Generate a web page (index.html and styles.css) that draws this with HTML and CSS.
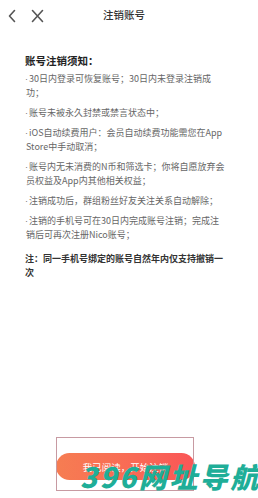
FILE: index.html
```html
<!DOCTYPE html>
<html lang="zh-CN">
<head>
<meta charset="utf-8">
<link rel="stylesheet" href="styles.css">
</head>
<body>
<div class="page">
  <header class="topbar">
    <div class="nav-icons">
      <svg class="icon-back" width="10" height="14" viewBox="0 0 10 14"><path d="M7.5 1.5 L2.5 7 L7.5 12.5" fill="none" stroke="#555" stroke-width="1.6" stroke-linecap="round" stroke-linejoin="round"/></svg>
      <svg class="icon-close" width="13" height="14" viewBox="0 0 13 14"><path d="M1.5 1.5 L11.5 12.5 M11.5 1.5 L1.5 12.5" fill="none" stroke="#555" stroke-width="1.6" stroke-linecap="round"/></svg>
    </div>
    <h1 class="title">注销账号</h1>
    <div></div>
  </header>

  <main class="content">
    <h2 class="heading">账号注销须知：</h2>
    <ul class="rules">
      <li>30日内登录可恢复账号；30日内未登录注销成功；</li>
      <li>账号未被永久封禁或禁言状态中；</li>
      <li>iOS自动续费用户：会员自动续费功能需您在App Store中手动取消；</li>
      <li>账号内无未消费的N币和筛选卡；你将自愿放弃会员权益及App内其他相关权益；</li>
      <li>注销成功后，群组粉丝好友关注关系自动解除；</li>
      <li>注销的手机号可在30日内完成账号注销；完成注销后可再次注册Nico账号；</li>
    </ul>
    <p class="note">注：同一手机号绑定的账号自然年内仅支持撤销一次</p>
  </main>

  <footer class="actions">
    <button class="confirm">我已阅读，开始注销</button>
    <div class="outline-box"></div>
    <div class="watermark">396网址导航</div>
  </footer>
</div>
</body>
</html>
```
FILE: styles.css
```css
* { box-sizing: border-box; }
html, body { margin: 0; padding: 0; background: #fff; }
body {
  font-family: "Noto Sans CJK SC", "Noto Sans", sans-serif;
  color: #333;
  width: 258px;
  height: 498px;
  overflow: hidden;
}
.page {
  display: flex;
  flex-direction: column;
  height: 498px;
}
.topbar {
  display: grid;
  grid-template-columns: 1fr auto 1fr;
  align-items: center;
  height: 30px;
  padding-right: 10px;
}
.nav-icons {
  display: flex;
  align-items: center;
  gap: 14px;
  padding-left: 7px;
  padding-top: 1px;
}
.title {
  margin: 0;
  font-size: 10.5px;
  font-weight: 500;
  color: #333;
  line-height: 14px;
}
.content {
  padding: 0 31px 0 25px;
}
.heading {
  margin: 24px 0 4px;
  font-size: 10.5px;
  font-weight: 700;
  line-height: 14px;
  color: #222;
}
.rules {
  list-style: none;
  margin: 0;
  padding: 0;
  display: flex;
  flex-direction: column;
  gap: 6px;
}
.rules li {
  font-size: 9px;
  line-height: 14px;
  color: #666;
  padding-left: 1px;
}
.rules li::before {
  content: "·";
  font-family: "Liberation Sans", sans-serif;
  display: inline-block;
  width: 4px;
  margin-left: -1px;
  color: #777;
}
.note {
  margin: 10px 0 0;
  font-size: 9px;
  line-height: 14px;
  font-weight: 700;
  color: #333;
}
.actions {
  margin-top: auto;
  position: relative;
  padding: 0 0 18px 56px;
}
.confirm {
  display: block;
  width: 139px;
  height: 27px;
  border: none;
  border-radius: 14px;
  background: linear-gradient(90deg, #f67d52 0%, #f96a55 55%, #fa5557 100%);
  color: #fff;
  font-family: "Noto Sans CJK SC", sans-serif;
  font-size: 9.5px;
  padding: 0;
}
.outline-box {
  position: absolute;
  left: 56px;
  top: -16px;
  width: 138px;
  height: 54px;
  border: 1px solid #c79aa2;
  pointer-events: none;
}
.watermark {
  position: absolute;
  left: 80px;
  top: 8px;
  font-family: "Noto Sans CJK SC", sans-serif;
  font-size: 28px;
  line-height: 30px;
  font-weight: 900;
  font-style: italic;
  color: #1fae98;
  white-space: nowrap;
  letter-spacing: 2.5px;
}
```
